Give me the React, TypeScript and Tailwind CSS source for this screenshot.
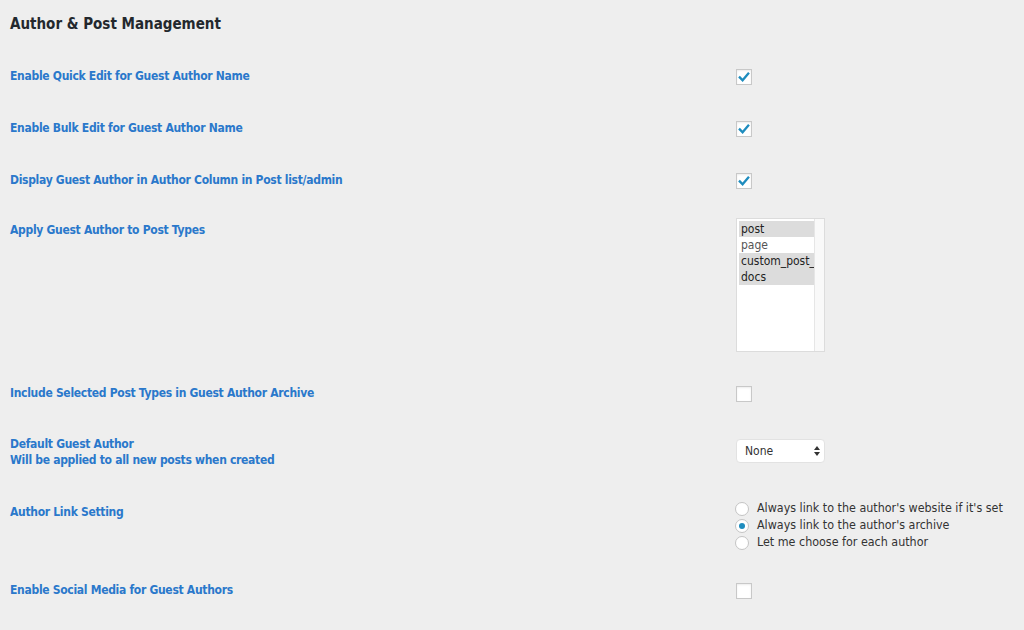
import React from "react";

const labelCls = "text-[12px] leading-[16px] font-bold tracking-[-0.3px] text-[#2a78cb]";

function Checkbox({ checked }: { checked?: boolean }) {
  return (
    <div className="mt-[1px] w-[16px] h-[16px] bg-white border border-[#c8c8c8] shadow-[inset_0_1px_2px_rgba(0,0,0,0.08)] flex items-center justify-center">
      {checked && (
        <svg width="14" height="14" viewBox="0 0 14 14">
          <path d="M2.8 7.4 L5.6 10.2 L11.2 3.6" fill="none" stroke="#1e8cbe" strokeWidth="2.3" strokeLinecap="square" />
        </svg>
      )}
    </div>
  );
}

function Radio({ checked, label }: { checked?: boolean; label: string }) {
  return (
    <div className="flex items-center h-[17px]">
      <div className="ml-[-1px] w-[14px] h-[14px] rounded-full bg-white border border-[#c4c4c4] flex items-center justify-center">
        {checked && <div className="w-[6px] h-[6px] rounded-full bg-[#1e8cbe]" />}
      </div>
      <span className="ml-[8px] text-[12.4px] text-[#333]">{label}</span>
    </div>
  );
}

function Row({ label, mt, children, labelPad = "" }: { label: React.ReactNode; mt: string; children: React.ReactNode; labelPad?: string }) {
  return (
    <div className={`grid grid-cols-[726px_1fr] items-start ${mt}`}>
      <div className={`${labelCls} ${labelPad}`}>{label}</div>
      <div>{children}</div>
    </div>
  );
}

export default function App() {
  const types = [
    { name: "post", sel: true },
    { name: "page", sel: false },
    { name: "custom_post_type", sel: true },
    { name: "docs", sel: true },
  ];
  return (
    <div className="min-h-screen w-full bg-[#eeeeee] px-[10px] pt-[12px] pb-[20px] overflow-hidden" style={{ fontFamily: '"DejaVu Sans Condensed", "DejaVu Sans", sans-serif' }}>
      <h2 className="text-[15px] leading-[24px] font-bold text-[#23282d]">Author &amp; Post Management</h2>

      <Row label="Enable Quick Edit for Guest Author Name" mt="mt-[32px]">
        <Checkbox checked />
      </Row>
      <Row label="Enable Bulk Edit for Guest Author Name" mt="mt-[35px]">
        <Checkbox checked />
      </Row>
      <Row label="Display Guest Author in Author Column in Post list/admin" mt="mt-[35px]">
        <Checkbox checked />
      </Row>
      <Row label="Apply Guest Author to Post Types" mt="mt-[29px]" labelPad="pt-[4px]">
        <div className="w-[89px] h-[134px] bg-white border border-[#dcdcdc] flex">
          <div className="flex-1 pt-[2px] pl-[2px] overflow-hidden">
            {types.map((t) => (
              <div
                key={t.name}
                className={`h-[16px] leading-[16px] text-[12px] px-[2px] whitespace-nowrap overflow-hidden ${t.sel ? "bg-[#dcdcdc] text-[#222]" : "text-[#555]"}`}
              >
                {t.name}
              </div>
            ))}
          </div>
          <div className="w-[10px] bg-[#f9f9f9] border-l border-[#e6e6e6]" />
        </div>
      </Row>
      <Row label="Include Selected Post Types in Guest Author Archive" mt="mt-[33px]">
        <Checkbox />
      </Row>
      <Row
        label={
          <>
            Default Guest Author
            <br />
            Will be applied to all new posts when created
          </>
        }
        mt="mt-[34px]"
      >
        <div className="mt-[3px] w-[89px] h-[24px] bg-white rounded-[4px] border border-[#e2e2e2] flex items-center justify-between pl-[8px] pr-[4px]">
          <span className="text-[12px] text-[#333]">None</span>
          <svg width="6" height="12" viewBox="0 0 6 12">
            <path d="M0 5 L3 1 L6 5 Z" fill="#333" />
            <path d="M0 7 L3 11 L6 7 Z" fill="#333" />
          </svg>
        </div>
      </Row>
      <Row label="Author Link Setting" mt="mt-[32px]" labelPad="pt-[4px]">
        <div>
          <Radio label="Always link to the author's website if it's set" />
          <Radio checked label="Always link to the author's archive" />
          <Radio label="Let me choose for each author" />
        </div>
      </Row>
      <Row label="Enable Social Media for Guest Authors" mt="mt-[31px]">
        <Checkbox />
      </Row>
    </div>
  );
}
